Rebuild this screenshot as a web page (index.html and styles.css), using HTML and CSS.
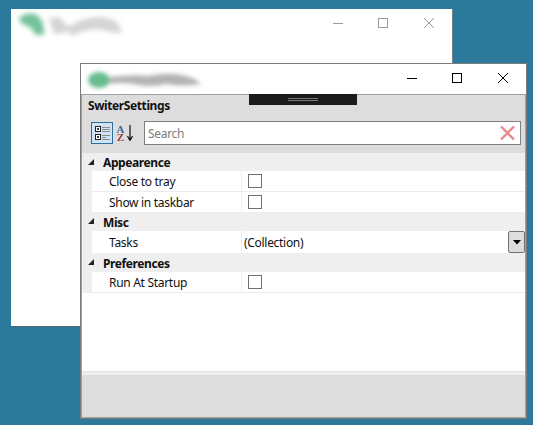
FILE: index.html
```html
<!DOCTYPE html>
<html lang="en">
<head>
  <meta charset="UTF-8" />
  <title>SwiterSettings</title>
  <link rel="stylesheet" href="styles.css">
</head>
<body>

  <!-- window behind, inactive -->
  <div class="window window-back">
    <div class="titlebar">
      <svg class="logo" width="120" height="40" viewBox="0 0 120 40">
        <defs>
          <filter id="blurBack" x="-20%" y="-40%" width="140%" height="180%"><feGaussianBlur stdDeviation="2.500" /></filter>
        </defs>
        <g filter="url(#blurBack)">
          <path d="M5 9 Q14 2 23 6 Q31 13 30 25 Q24 28 20 24 Q18 18 13 17 Q6 15 5 9Z" fill="#72c29a" />
          <path d="M35 9 L45 8 L58 22 L40 25Z" fill="#d4d4d4" />
          <path d="M52 19 Q70 7 88 8 Q105 10 108 23 Q98 25 86 20 Q70 20 58 27Z" fill="#d4d4d4" />
        </g>
      </svg>
      <div class="caption">
        <svg width="45" height="14" viewBox="0 0 45 14"><path d="M0 7.500H10" /></svg>
        <svg width="45" height="14" viewBox="0 0 45 14"><rect x="0.500" y="2.500" width="9" height="9" /></svg>
        <svg width="12" height="14" viewBox="0 0 12 14"><path d="M1 2L11 12M11 2L1 12" /></svg>
      </div>
    </div>
  </div>

  <!-- settings window -->
  <div class="window window-front">
    <div class="titlebar titlebar-front">
      <svg class="logo" width="130" height="30" viewBox="0 0 130 30">
        <defs>
          <filter id="blurFront" x="-20%" y="-50%" width="140%" height="200%"><feGaussianBlur stdDeviation="2.200" /></filter>
        </defs>
        <g filter="url(#blurFront)">
          <ellipse cx="17" cy="14" rx="11" ry="8" fill="#68bb90" />
          <path d="M28 11 Q50 8 66 10 Q84 6 100 9 Q114 12 119 18 Q100 21 84 18 Q70 22 50 18 Q38 16 28 18Z" fill="#b4b4b4" />
        </g>
      </svg>
      <div class="caption">
        <svg width="45" height="14" viewBox="0 0 45 14"><path d="M0 7.500H10" /></svg>
        <svg width="45" height="14" viewBox="0 0 45 14"><rect x="0.500" y="2.500" width="9" height="9" /></svg>
        <svg width="12" height="14" viewBox="0 0 12 14"><path d="M1 2L11 12M11 2L1 12" /></svg>
      </div>
    </div>

    <div class="handle"><span></span></div>

    <div class="content">
      <div class="panel">
        <h1 class="object-name">SwiterSettings</h1>
        <div class="toolbar">
          <button class="tool tool-active" type="button" aria-label="Categorized">
            <svg width="20" height="20" viewBox="0 0 20 20">
              <rect x="3.500" y="3.500" width="5" height="5" fill="#fff" stroke="#222" />
              <path d="M5 6H7M6 5V7" stroke="#000" />
              <rect x="3.500" y="11.500" width="5" height="5" fill="#fff" stroke="#222" />
              <path d="M5 14H7M6 13V15" stroke="#000" />
              <path d="M10 4.500H18M10 6.500H18M10 8.500H18M10 12.500H18M10 14.500H14M10 16.500H18" stroke="#8c8c8c" />
            </svg>
          </button>
          <div class="sort">
            <span class="sort-az">A<br>Z</span>
            <svg width="8" height="16" viewBox="0 0 8 16"><path d="M4 0V15M1.500 11L4 15.500L6.500 11" fill="none" stroke="#111" stroke-width="1.200" /></svg>
          </div>
          <div class="search">
            <span class="search-text">Search</span>
            <svg width="15" height="14" viewBox="0 0 15 14"><path d="M1 0.500L14 13.500M14 0.500L1 13.500" stroke="#e58c8c" stroke-width="2.400" /></svg>
          </div>
        </div>
      </div>

      <div class="grid">
        <div class="category"><i class="arrow"></i>Appearence</div>
        <div class="prop">
          <div class="prop-name">Close to tray</div>
          <div class="prop-value"><span class="check"></span></div>
        </div>
        <div class="prop prop-last">
          <div class="prop-name">Show in taskbar</div>
          <div class="prop-value"><span class="check"></span></div>
        </div>

        <div class="category category-next"><i class="arrow"></i>Misc</div>
        <div class="prop prop-tall">
          <div class="prop-name">Tasks</div>
          <div class="prop-value prop-collection">
            (Collection)
            <span class="drop"><svg width="8" height="5" viewBox="0 0 8 5"><path d="M0 0H8L4 4.500Z" fill="#000" /></svg></span>
          </div>
        </div>

        <div class="category category-next"><i class="arrow"></i>Preferences</div>
        <div class="prop">
          <div class="prop-name">Run At Startup</div>
          <div class="prop-value"><span class="check"></span></div>
        </div>
      </div>

      <div class="status"></div>
    </div>
  </div>

</body>
</html>
```

FILE: styles.css
```css
body {
  margin: 0;
  width: 533px;
  height: 425px;
  overflow: hidden;
  position: relative;
  background-color: #2c7a9b;
  font-family: "Noto Sans", "Open Sans", sans-serif;
  font-size: 12px;
  letter-spacing: -0.3px;
  color: #111;
}

.window {
  position: absolute;
  box-sizing: border-box;
  background-color: #ffffff;
}

.window-back {
  left: 11px;
  top: 9px;
  width: 442px;
  height: 318px;
  border-right: 1px solid #6f7f88;
  border-bottom: 1px solid #4f6570;
}

.window-front {
  left: 80px;
  top: 63px;
  width: 447px;
  height: 356px;
  display: flex;
  flex-direction: column;
  border: 1px solid #7c7c7c;
}

.titlebar {
  position: relative;
  height: 30px;
}

.titlebar-front {
  flex: none;
  border-bottom: 1px solid #a0a0a8;
}

.logo {
  position: absolute;
  left: 1px;
  top: 2px;
}

.window-back .logo {
  left: 3px;
  top: 0;
}

.caption {
  position: absolute;
  right: 17px;
  top: 7px;
  display: flex;
}

.caption svg {
  fill: none;
  stroke: #000;
  stroke-width: 1;
}

.window-back .caption svg {
  stroke: #999;
}

.handle {
  position: absolute;
  left: 168px;
  top: 30px;
  width: 108px;
  height: 11px;
  background-color: #1a1a1a;
  display: flex;
  justify-content: center;
  padding-top: 4px;
  box-sizing: border-box;
}

.handle span {
  width: 30px;
  height: 1px;
  border-top: 1px solid #777;
  border-bottom: 1px solid #777;
}

.content {
  flex: 1;
  display: flex;
  flex-direction: column;
  border: 1px solid #a0a0a0;
  border-top: none;
}

.panel {
  flex: none;
  height: 58px;
  box-sizing: border-box;
  background-color: #dddddd;
  padding: 2px 0 0 6px;
}

.object-name {
  margin: 0;
  font-size: 12px;
  font-weight: bold;
  line-height: 18px;
  letter-spacing: -0.4px;
}

.toolbar {
  display: flex;
  align-items: center;
  margin: 6px 0 0 3px;
}

.tool {
  width: 22px;
  height: 22px;
  padding: 0;
  display: flex;
  align-items: center;
  justify-content: center;
  box-sizing: border-box;
  border: 1px solid #2f6f9f;
  background-color: #cfe3f5;
}

.sort {
  width: 22px;
  margin: 0 6px 0 3px;
  display: flex;
  align-items: center;
  gap: 1px;
}

.sort-az {
  width: 9px;
  font-family: "Liberation Serif", serif;
  font-size: 11px;
  font-weight: bold;
  line-height: 8px;
  letter-spacing: 0;
  text-align: center;
  background-image: linear-gradient(#2f5fa8 50%, #8f3a3a 50%);
  -webkit-background-clip: text;
  background-clip: text;
  color: transparent;
}

.search {
  width: 377px;
  height: 24px;
  box-sizing: border-box;
  border: 1px solid #7f7f7f;
  background-color: #ffffff;
  padding: 0 5px 0 3px;
  display: flex;
  align-items: center;
  justify-content: space-between;
  color: #7b7b7b;
}

.grid {
  flex: 1;
  background-color: #ffffff;
}

.category {
  height: 18px;
  line-height: 20px;
  background-color: #efefef;
  font-weight: bold;
  letter-spacing: -0.4px;
  padding-left: 21px;
  position: relative;
}

.category-next {
  height: 19px;
  line-height: 21px;
}

.arrow {
  position: absolute;
  left: 6px;
  top: 6px;
  width: 0;
  height: 0;
  border-left: 6px solid transparent;
  border-bottom: 6px solid #222;
}

.prop {
  display: flex;
  height: 21px;
  box-sizing: border-box;
  border-left: 10px solid #efefef;
  border-bottom: 1px solid #ececec;
  line-height: 22px;
}

.prop-last {
  height: 20px;
  border-bottom: none;
}

.prop-tall {
  height: 22px;
  border-bottom: none;
  line-height: 24px;
}

.prop-name {
  width: 150px;
  padding-left: 17px;
  box-sizing: border-box;
  border-right: 1px solid #efefef;
}

.prop-value {
  flex: 1;
  display: flex;
  align-items: center;
  padding-left: 6px;
}

.prop-collection {
  padding-left: 2px;
  align-items: flex-start;
  justify-content: space-between;
}

.check {
  width: 14px;
  height: 14px;
  box-sizing: border-box;
  border: 1px solid #707070;
  background-color: #ffffff;
}

.drop {
  width: 17px;
  height: 22px;
  box-sizing: border-box;
  border: 1px solid #707070;
  border-radius: 2px;
  background-color: #dddddd;
  display: flex;
  align-items: center;
  justify-content: center;
}

.status {
  flex: none;
  height: 46px;
  box-sizing: border-box;
  background-color: #dddddd;
  border-top: 1px solid #e4e4e4;
  box-shadow: inset 0 3px 0 #eeeeee;
}
```
